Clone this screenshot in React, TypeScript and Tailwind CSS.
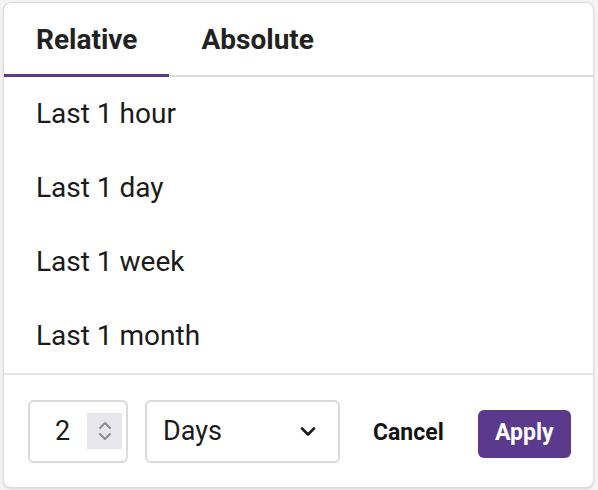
import { useState } from 'react'

const OPTIONS = ['Last 1 hour', 'Last 1 day', 'Last 1 week', 'Last 1 month']

export default function App() {
  const [tab, setTab] = useState<'relative' | 'absolute'>('relative')
  const [count, setCount] = useState(2)

  return (
    <div className="w-[598px] h-[490px] bg-[#f4f4f4] pt-[2px] pl-[3px] overflow-hidden" style={{ fontFamily: 'Roboto, "Liberation Sans", sans-serif' }}>
      <div className="w-[591px] h-[486px] bg-white border border-[#dcdcdc] rounded-lg shadow-sm flex flex-col overflow-hidden">
        <div className="flex h-[74px] border-b-2 border-[#e0e0e0] shrink-0">
          <button
            onClick={() => setTab('relative')}
            className={`px-8 h-[74px] -mb-[2px] text-[28px] font-bold text-[#222] ${tab === 'relative' ? 'border-b-[3px] border-[#5b3a8d] pt-[3px]' : ''}`}
          >
            Relative
          </button>
          <button
            onClick={() => setTab('absolute')}
            className={`px-8 h-[74px] -mb-[2px] text-[28px] font-bold text-[#222] ${tab === 'absolute' ? 'border-b-[3px] border-[#5b3a8d] pt-[3px]' : ''}`}
          >
            Absolute
          </button>
        </div>

        <ul className="flex flex-col">
          {OPTIONS.map(opt => (
            <li key={opt} className="h-[74px] flex items-center px-8 text-[28px] text-[#1b1b1b] cursor-pointer">
              {opt}
            </li>
          ))}
        </ul>

        <div className="flex-1 border-t-2 border-[#e6e6e6] flex items-center pl-6 pr-5">
          <div className="w-[100px] h-[63px] border-2 border-[#dadada] rounded-md flex items-center pl-[25px] pr-[4px]">
            <span className="text-[27px] text-[#1b1b1b] w-[33px]">{count}</span>
            <div className="w-[36px] h-[36px] bg-[#e7e6ec] flex flex-col items-center justify-center gap-[2px]">
              <button onClick={() => setCount(count + 1)} className="text-[#8b8a99]">
                <svg width="14" height="9" viewBox="0 0 14 9" fill="none" stroke="currentColor" strokeWidth="2" strokeLinecap="round" strokeLinejoin="round">
                  <path d="M2 7l5-5 5 5" />
                </svg>
              </button>
              <button onClick={() => setCount(Math.max(1, count - 1))} className="text-[#8b8a99]">
                <svg width="14" height="9" viewBox="0 0 14 9" fill="none" stroke="currentColor" strokeWidth="2" strokeLinecap="round" strokeLinejoin="round">
                  <path d="M2 2l5 5 5-5" />
                </svg>
              </button>
            </div>
          </div>

          <div className="ml-[17px] w-[195px] h-[63px] border-2 border-[#dadada] rounded-md flex items-center justify-between pl-[16px] pr-[21px]">
            <span className="text-[27px] text-[#1b1b1b]">Days</span>
            <svg width="18" height="11" viewBox="0 0 18 11" fill="none" stroke="#1b1b1b" strokeWidth="2.6" strokeLinecap="round" strokeLinejoin="round">
              <path d="M3 2.5l6 6 6-6" />
            </svg>
          </div>

          <button className="ml-[33px] mt-[5px] text-[23px] font-bold text-[#141414]">Cancel</button>

          <button className="ml-[34px] mt-[5px] w-[93px] h-[48px] rounded-md bg-[#5b3a8d] text-white text-[23px] font-bold">
            Apply
          </button>
        </div>
      </div>
    </div>
  )
}
